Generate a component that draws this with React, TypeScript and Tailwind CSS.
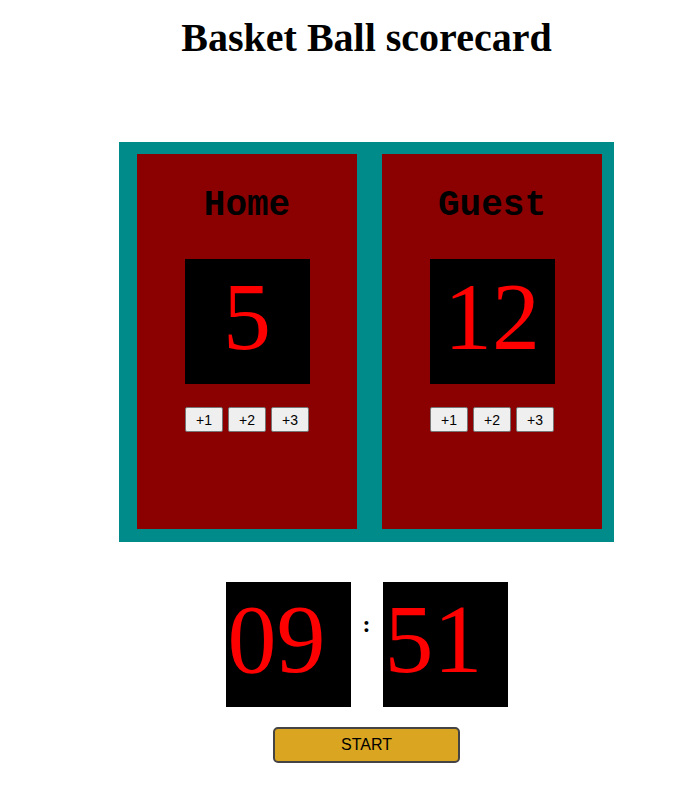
import { useState } from "react";

const serif = "font-['Times_New_Roman','Liberation_Serif',serif]";
const mono = "font-['Courier_New','Liberation_Mono',monospace]";
const sans = "font-['Arial','Liberation_Sans',sans-serif]";

function TeamPanel({ name, score, onAdd }: { name: string; score: number; onAdd: (n: number) => void }) {
  return (
    <div className="w-[220px] h-[375px] bg-[#8b0000] flex flex-col items-center pt-[32px]">
      <h2 className={`${mono} font-bold text-[36px] leading-[40px] text-black`}>{name}</h2>
      {/* score box */}
      <div className="mt-[33px] w-[125px] h-[125px] bg-black flex items-center justify-center pb-[10px]">
        <span className={`${serif} text-[96px] leading-none text-[#ff0000]`}>{score}</span>
      </div>
      <div className="mt-[23px] flex gap-[5px]">
        {[1, 2, 3].map((n) => (
          <button
            key={n}
            onClick={() => onAdd(n)}
            className={`${sans} w-[38px] h-[25px] text-[14px] leading-none text-black bg-[#efefef] border border-[#767676] rounded-[2px]`}
          >
            +{n}
          </button>
        ))}
      </div>
    </div>
  );
}

export default function App() {
  const [home, setHome] = useState(5);
  const [guest, setGuest] = useState(12);

  return (
    <div className="w-[690px] min-h-[791px] bg-white">
      <div className="ml-[43px] w-[647px] flex flex-col items-center pt-[15px]">
        <h1 className={`${serif} font-bold text-[40px] leading-[46px] text-black`}>Basket Ball scorecard</h1>

        {/* scoreboard */}
        <div className="mt-[81px] w-[495px] h-[400px] bg-[#008b8b] flex gap-[25px] pl-[18px] pt-[12px]">
          <TeamPanel name="Home" score={home} onAdd={(n) => setHome(home + n)} />
          <TeamPanel name="Guest" score={guest} onAdd={(n) => setGuest(guest + n)} />
        </div>

        {/* timer */}
        <div className="mt-[40px] flex">
          <div className="w-[125px] h-[125px] bg-black flex items-center pl-[2px] pb-[12px]">
            <span className={`${serif} text-[98px] leading-none text-[#ff0000]`}>09</span>
          </div>
          <div className="w-[32px] flex justify-center pt-[28px]">
            <span className={`${serif} font-bold text-[24px] leading-[28px] text-black`}>:</span>
          </div>
          <div className="w-[125px] h-[125px] bg-black flex items-center pl-[2px] pb-[12px]">
            <span className={`${serif} text-[98px] leading-none text-[#ff0000]`}>51</span>
          </div>
        </div>

        <button
          className={`${sans} mt-[20px] w-[187px] h-[36px] bg-[#daa520] border-2 border-[#444] rounded-[5px] text-[16px] text-black`}
        >
          START
        </button>
      </div>
    </div>
  );
}
